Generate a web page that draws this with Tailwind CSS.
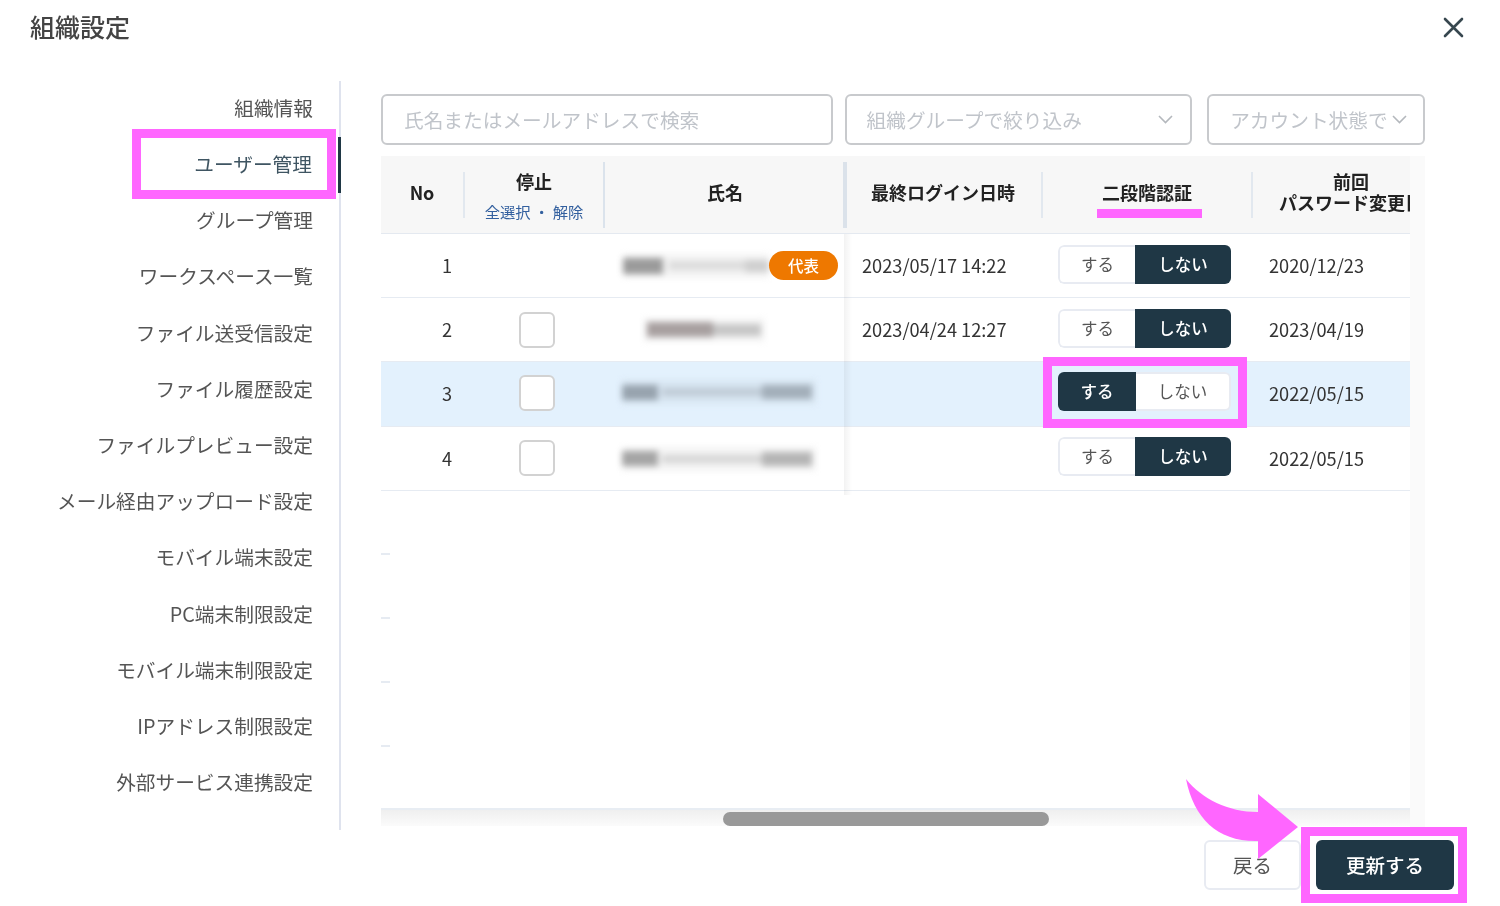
<!DOCTYPE html>
<html lang="ja">
<head>
<meta charset="utf-8">
<script src="https://cdn.jsdelivr.net/npm/@tailwindcss/browser@4"></script>
<title>組織設定</title>
</head>
<body class="bg-white">
<div class="relative w-[1500px] h-[906px] overflow-hidden bg-white text-[#333] blur-[0.4px] font-['Noto_Sans_CJK_JP','Noto_Sans',sans-serif]">

  <header class="flex justify-between h-[81px] pl-[30px] pr-[36px]">
    <h1 class="text-[25px] leading-[36px] mt-[8px] font-medium text-[#444]">組織設定</h1>
    <svg class="mt-[17px]" width="21" height="21" viewBox="0 0 21 21" fill="none" stroke="#37474f" stroke-width="2.6" stroke-linecap="round"><path d="M2 2L19 19M19 2L2 19"/></svg>
  </header>

  <div class="flex h-[749px]">
    <nav class="w-[341px] shrink-0 border-r-2 border-[#dfe3ee] text-[19.7px] text-[#555] text-right">
      <a class="flex items-center justify-end h-[56.2px] pb-[3px] pr-[26px]">組織情報</a>
      <a class="flex items-center justify-end h-[56.2px] pb-[3px] pr-[26px] text-[#3f5562] border-r-[3px] border-[#1f3745] mr-[-2px]">ユーザー管理</a>
      <a class="flex items-center justify-end h-[56.2px] pb-[3px] pr-[26px]">グループ管理</a>
      <a class="flex items-center justify-end h-[56.2px] pb-[3px] pr-[26px]">ワークスペース一覧</a>
      <a class="flex items-center justify-end h-[56.2px] pb-[3px] pr-[26px]">ファイル送受信設定</a>
      <a class="flex items-center justify-end h-[56.2px] pb-[3px] pr-[26px]">ファイル履歴設定</a>
      <a class="flex items-center justify-end h-[56.2px] pb-[3px] pr-[26px]">ファイルプレビュー設定</a>
      <a class="flex items-center justify-end h-[56.2px] pb-[3px] pr-[26px]">メール経由アップロード設定</a>
      <a class="flex items-center justify-end h-[56.2px] pb-[3px] pr-[26px]">モバイル端末設定</a>
      <a class="flex items-center justify-end h-[56.2px] pb-[3px] pr-[26px]">PC端末制限設定</a>
      <a class="flex items-center justify-end h-[56.2px] pb-[3px] pr-[26px]">モバイル端末制限設定</a>
      <a class="flex items-center justify-end h-[56.2px] pb-[3px] pr-[26px]">IPアドレス制限設定</a>
      <a class="flex items-center justify-end h-[56.2px] pb-[3px] pr-[26px]">外部サービス連携設定</a>
    </nav>

    <main class="w-[1084px] pl-[40px] pt-[13px]">
      <div class="flex h-[51px] text-[19.7px] text-[#c0c4ca]">
        <div class="w-[452px] flex items-center pl-[21px] border-2 border-[#c8cacd] rounded-md">氏名またはメールアドレスで検索</div>
        <div class="w-[348px] ml-[12px] flex items-center justify-between pl-[20px] pr-[17px] border-2 border-[#c8cacd] rounded-md">
          <span>組織グループで絞り込み</span>
          <svg width="15" height="9" viewBox="0 0 15 9" fill="none" stroke="#b4b8bd" stroke-width="1.6"><path d="M1 1L7.5 7.5L14 1"/></svg>
        </div>
        <div class="w-[218px] ml-[15px] flex items-center justify-between pl-[21px] pr-[16px] border-2 border-[#c8cacd] rounded-md whitespace-nowrap">
          <span>アカウント状態で</span>
          <svg width="15" height="9" viewBox="0 0 15 9" fill="none" stroke="#b4b8bd" stroke-width="1.6"><path d="M1 1L7.5 7.5L14 1"/></svg>
        </div>
      </div>

      <div class="relative mt-[11px] w-[1044px] h-[672px]">
        <div class="absolute right-0 top-0 w-[15px] h-[672px] bg-[#fafafa]"></div>
        <div class="relative w-[1029px] h-[654px] overflow-hidden border-b-2 border-[#e8edf3] bg-white">

          <div class="flex h-[78px] items-center bg-[#f7f7f7] border-b border-[#e4e9f0] text-[18px] font-bold text-[#222] text-center">
            <div class="w-[84px] h-[46px] pb-[5px] flex items-center justify-center border-r-2 border-[#e2e8ef]">No</div>
            <div class="w-[140px] h-[66px] border-r-2 border-[#dbe3ec] flex flex-col items-center justify-center">
              <span class="leading-[32px]">停止</span>
              <span class="text-[15.3px] leading-[28px] font-normal text-[#33609f] whitespace-pre">全選択 ・ 解除</span>
            </div>
            <div class="w-[240px] h-[62px] pb-[5px] flex items-center justify-center">氏名</div>
            <div class="w-[198px] h-[46px] pb-[5px] flex items-center justify-center border-r-2 border-[#e2e8ef]">最終ログイン日時</div>
            <div class="w-[210px] h-[46px] pb-[5px] flex items-center justify-center border-r-2 border-[#e2e8ef]">二段階認証</div>
            <div class="w-[157px] pl-[26px] pb-[5px] whitespace-nowrap leading-[21px]">
              <span class="inline-block w-[144px]">前回<br>パスワード変更日</span>
            </div>
          </div>

          <div class="flex h-[64px] items-center border-b border-[#e6ebf2] text-[18.2px]">
            <div class="w-[84px] pr-[13px] text-right">1</div>
            <div class="w-[140px]"></div>
            <div class="w-[240px] relative h-full flex items-center">
              <div class="flex items-center ml-[18px] w-[146px] h-[24px] bg-[#f4f4f4] blur-[3px]">
                <div class="w-[40px] h-[16px] bg-[#9b9b9b]"></div>
                <div class="w-[76px] h-[9px] ml-[6px] bg-[#dcdcdc]"></div>
                <div class="w-[24px] h-[12px] bg-[#cfcfcf]"></div>
              </div>
              <span class="absolute left-[164px] top-[17px] w-[69px] h-[29px] rounded-full bg-[#ee7800] text-white text-[15.5px] font-medium flex items-center justify-center">代表</span>
            </div>
            <div class="w-[198px] pl-[17px]">2023/05/17 14:22</div>
            <div class="w-[210px] pl-[15px] pb-[2px]">
              <div class="flex w-[173px] h-[39px] text-[16.5px] rounded-md overflow-hidden">
                <span class="w-[77px] flex items-center justify-center border-2 border-r-0 border-[#e8ebf2] rounded-l-md bg-white text-[#555]">する</span>
                <span class="w-[96px] flex items-center justify-center bg-[#1f3745] text-white font-medium">しない</span>
              </div>
            </div>
            <div class="pl-[16px]">2020/12/23</div>
          </div>

          <div class="flex h-[64px] items-center border-b border-[#e6ebf2] text-[18.2px]">
            <div class="w-[84px] pr-[13px] text-right">2</div>
            <div class="w-[140px] pl-[54px]"><span class="block w-[36px] h-[36px] border-2 border-[#d2d2d2] rounded-md bg-white"></span></div>
            <div class="w-[240px] flex items-center">
              <div class="flex items-center ml-[38px] w-[122px] h-[24px] bg-[#f6f6f6] blur-[3px]">
                <div class="w-[66px] h-[15px] ml-[4px] bg-[#a8a0a0]"></div>
                <div class="w-[48px] h-[12px] bg-[#c6c6c6]"></div>
              </div>
            </div>
            <div class="w-[198px] pl-[17px]">2023/04/24 12:27</div>
            <div class="w-[210px] pl-[15px] pb-[2px]">
              <div class="flex w-[173px] h-[39px] text-[16.5px] rounded-md overflow-hidden">
                <span class="w-[77px] flex items-center justify-center border-2 border-r-0 border-[#e8ebf2] rounded-l-md bg-white text-[#555]">する</span>
                <span class="w-[96px] flex items-center justify-center bg-[#1f3745] text-white font-medium">しない</span>
              </div>
            </div>
            <div class="pl-[16px]">2023/04/19</div>
          </div>

          <div class="flex h-[65px] items-center border-b border-[#e6ebf2] bg-[#e3f1fd] text-[18.2px]">
            <div class="w-[84px] pr-[13px] text-right">3</div>
            <div class="w-[140px] pl-[54px] pb-[2px]"><span class="block w-[36px] h-[36px] border-2 border-[#d2d2d2] rounded-md bg-white"></span></div>
            <div class="w-[240px] flex items-center pb-[4px]">
              <div class="flex items-center ml-[17px] w-[194px] h-[24px] bg-[#d8e6f2] blur-[3px]">
                <div class="w-[36px] h-[15px] bg-[#97a3ae]"></div>
                <div class="w-[100px] h-[8px] ml-[4px] bg-[#bfcbd6]"></div>
                <div class="w-[50px] h-[14px] bg-[#a3afba]"></div>
              </div>
            </div>
            <div class="w-[198px]"></div>
            <div class="w-[210px] pl-[15px] pb-[5px]">
              <div class="flex w-[173px] h-[39px] text-[16.5px] rounded-md overflow-hidden">
                <span class="w-[78px] flex items-center justify-center bg-[#1f3745] text-white font-medium">する</span>
                <span class="w-[95px] flex items-center justify-center border-2 border-l-0 border-[#e8ebf2] rounded-r-md bg-white text-[#555]">しない</span>
              </div>
            </div>
            <div class="pl-[16px]">2022/05/15</div>
          </div>

          <div class="flex h-[64px] items-center border-b border-[#e6ebf2] text-[18.2px]">
            <div class="w-[84px] pr-[13px] text-right">4</div>
            <div class="w-[140px] pl-[54px] pb-[2px]"><span class="block w-[36px] h-[36px] border-2 border-[#d2d2d2] rounded-md bg-white"></span></div>
            <div class="w-[240px] flex items-center">
              <div class="flex items-center ml-[17px] w-[194px] h-[24px] bg-[#f4f4f4] blur-[3px]">
                <div class="w-[36px] h-[15px] bg-[#a5a5a5]"></div>
                <div class="w-[100px] h-[8px] ml-[4px] bg-[#d6d6d6]"></div>
                <div class="w-[50px] h-[14px] bg-[#b5b5b5]"></div>
              </div>
            </div>
            <div class="w-[198px]"></div>
            <div class="w-[210px] pl-[15px] pb-[4px]">
              <div class="flex w-[173px] h-[39px] text-[16.5px] rounded-md overflow-hidden">
                <span class="w-[77px] flex items-center justify-center border-2 border-r-0 border-[#e8ebf2] rounded-l-md bg-white text-[#555]">する</span>
                <span class="w-[96px] flex items-center justify-center bg-[#1f3745] text-white font-medium">しない</span>
              </div>
            </div>
            <div class="pl-[16px]">2022/05/15</div>
          </div>

          <div class="h-[64px] flex items-end"><span class="w-[9px] h-[2px] bg-[#e6ebf2]"></span></div>
          <div class="h-[64px] flex items-end"><span class="w-[9px] h-[2px] bg-[#e6ebf2]"></span></div>
          <div class="h-[64px] flex items-end"><span class="w-[9px] h-[2px] bg-[#e6ebf2]"></span></div>
          <div class="h-[64px] flex items-end"><span class="w-[9px] h-[2px] bg-[#e6ebf2]"></span></div>

          <div class="absolute left-[462px] top-[6px] w-[4px] h-[66px] bg-[#dbe2ea]"></div>
          <div class="absolute left-[463px] top-[78px] w-[8px] h-[261px] bg-gradient-to-r from-black/[0.05] to-transparent"></div>
        </div>
        <div class="relative h-[16px] w-[1029px] bg-gradient-to-b from-[#efefef] to-[#fbfbfb]">
          <div class="absolute left-[342px] top-[2px] w-[326px] h-[14px] rounded-full bg-[#999]"></div>
        </div>
      </div>
    </main>
  </div>

  <footer class="flex justify-end pt-[10px] pr-[46px] text-[19.5px]">
    <button class="w-[97px] h-[50px] border-2 border-[#e8ebf2] rounded-md text-[#555] bg-white">戻る</button>
    <button class="w-[138px] h-[50px] ml-[15px] rounded-md bg-[#1f3745] text-white font-medium">更新する</button>
  </footer>

  <div class="absolute left-[132px] top-[129px] w-[204px] h-[70px] border-[9px] border-[#ff66ff]"></div>
  <div class="absolute left-[1097px] top-[209px] w-[105px] h-[9px] bg-[#ff66ff]"></div>
  <div class="absolute left-[1043px] top-[357px] w-[204px] h-[71px] border-[9px] border-[#ff66ff]"></div>
  <div class="absolute left-[1301px] top-[827px] w-[166px] h-[76px] border-[9px] border-[#ff66ff]"></div>
  <svg class="absolute left-[1180px] top-[775px]" width="125" height="90" viewBox="0 0 125 90"><path fill="#ff66ff" d="M6 4C22 24 48 37 78 37V19L118 52L78 84V66C38 67 14 44 6 4Z"/></svg>
</div>
</body>
</html>
